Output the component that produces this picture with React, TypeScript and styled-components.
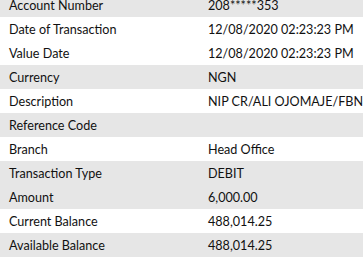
import React from "react";
import styled, { createGlobalStyle } from "styled-components";

const Global = createGlobalStyle`
  html, body { margin: 0; padding: 0; background: #ffffff; overflow: hidden; }
  body { font-family: Lato, "Open Sans", "Liberation Sans", sans-serif; }
`;

const Table = styled.div`
  display: flex;
  flex-direction: column;
  margin-top: -7px;
  width: 363px;
`;

const Row = styled.div<{ $shaded: boolean }>`
  display: grid;
  grid-template-columns: 199px 1fr;
  height: 24px;
  align-items: center;
  background: ${(p) => (p.$shaded ? "#e6e6e6" : "#ffffff")};
`;

const Cell = styled.div`
  padding-left: 9px;
  padding-top: 2px;
  font-size: 12.6px;
  line-height: 16px;
  color: #111111;
  white-space: nowrap;
  overflow: hidden;
`;

const rows: [string, string, boolean][] = [
  ["Account Number", "208*****353", true],
  ["Date of Transaction", "12/08/2020 02:23:23 PM", false],
  ["Value Date", "12/08/2020 02:23:23 PM", false],
  ["Currency", "NGN", true],
  ["Description", "NIP CR/ALI OJOMAJE/FBN", false],
  ["Reference Code", "", true],
  ["Branch", "Head Office", false],
  ["Transaction Type", "DEBIT", true],
  ["Amount", "6,000.00", true],
  ["Current Balance", "488,014.25", false],
  ["Available Balance", "488,014.25", true],
];

export default function App() {
  return (
    <>
      <Global />
      <Table>
        {rows.map(([label, value, shaded]) => (
          <Row key={label} $shaded={shaded}>
            <Cell>{label}</Cell>
            <Cell>{value}</Cell>
          </Row>
        ))}
      </Table>
    </>
  );
}
